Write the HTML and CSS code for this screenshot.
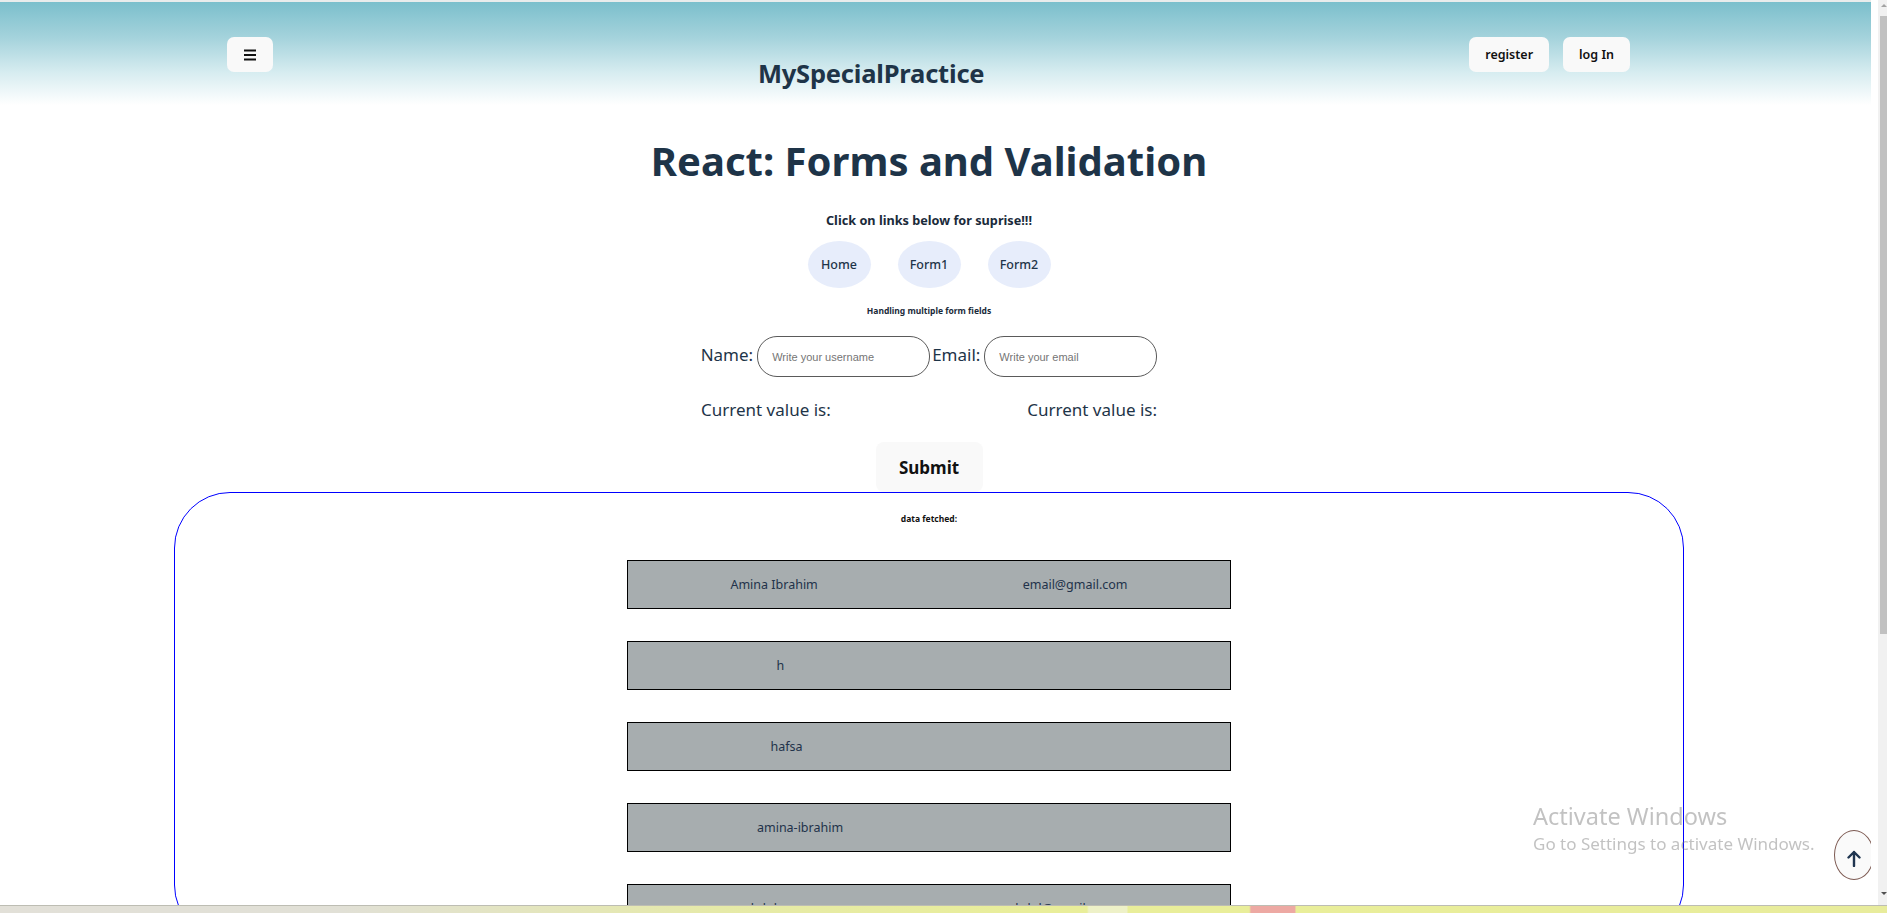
FILE: index.html
```html
<!DOCTYPE html>
<html lang="en">
<head>
<meta charset="utf-8">
<title>MySpecialPractice</title>
<link rel="stylesheet" href="styles.css">
</head>
<body>
<div class="topline"></div>
<header class="header">
  <button class="menu-btn" aria-label="menu">
    <svg width="12" height="12" viewBox="0 0 12 12"><rect x="0" y="0.5" width="12" height="2" fill="#111"/><rect x="0" y="5" width="12" height="2" fill="#111"/><rect x="0" y="9.5" width="12" height="2" fill="#111"/></svg>
  </button>
  <div class="brand">MySpecialPractice</div>
  <div class="auth">
    <button class="hbtn">register</button>
    <button class="hbtn">log In</button>
  </div>
</header>
<main class="main">
  <h1 class="title">React: Forms and Validation</h1>
  <p class="hint">Click on links below for suprise!!!</p>
  <nav class="pills">
    <a class="pill">Home</a>
    <a class="pill">Form1</a>
    <a class="pill">Form2</a>
  </nav>
  <p class="sub">Handling multiple form fields</p>
  <form class="form">
    <div class="fields">
      <label class="lbl">Name:</label>
      <input class="inp inp-name" type="text" placeholder="Write your username">
      <label class="lbl">Email:</label>
      <input class="inp" type="text" placeholder="Write your email">
    </div>
    <div class="values">
      <span>Current value is:</span>
      <span>Current value is:</span>
    </div>
    <button class="submit" type="button">Submit</button>
  </form>
  <section class="data">
    <p class="fetched">data fetched:</p>
    <div class="rows">
      <div class="row"><span>Amina Ibrahim</span><span>email@gmail.com</span></div>
      <div class="row"><span>h</span><span></span></div>
      <div class="row"><span>hafsa</span><span></span></div>
      <div class="row"><span>amina-ibrahim</span><span></span></div>
      <div class="row"><span>abdul</span><span>abdul@gmail.com</span></div>
    </div>
  </section>
</main>

<div class="watermark">
  <div class="wm-big">Activate Windows</div>
  <div class="wm-small">Go to Settings to activate Windows.</div>
</div>
<button class="to-top" aria-label="back to top">
  <svg width="14" height="17" viewBox="0 0 14 17"><path d="M7 16V2M1.5 7.5L7 2l5.5 5.5" fill="none" stroke="#1f3550" stroke-width="2.4" stroke-linecap="round" stroke-linejoin="round"/></svg>
</button>
<div class="scrollbar"><div class="sb-up"></div><div class="sb-thumb"></div><div class="sb-down"></div></div>
<div class="taskbar"></div>
</body>
</html>
```
FILE: styles.css
```css
html, body {
  margin: 0;
  padding: 0;
  overflow: hidden;
  height: 913px;
}
body {
  font-family: "Noto Sans", "Open Sans", sans-serif;
  color: #1f3446;
  background: #fff;
}
.topline {
  height: 2px;
  background: #e9ecec;
}
.header {
  height: 103px;
  box-sizing: border-box;
  padding: 35px 257px 0 227px;
  display: flex;
  justify-content: space-between;
  align-items: flex-start;
  background: linear-gradient(to bottom, #7bbfcc 0%, #a5d3dc 35%, #d6ecf0 68%, #ffffff 100%);
}
.menu-btn {
  width: 46px;
  height: 35px;
  border: none;
  border-radius: 7px;
  background: #f9f9f9;
  display: flex;
  align-items: center;
  justify-content: center;
  padding: 0;
}
.brand {
  margin-top: 21px;
  font-size: 25.5px;
  line-height: 30px;
  font-weight: 700;
  color: #1e3448;
  letter-spacing: -0.2px;
}
.auth {
  display: flex;
  gap: 14px;
}
.hbtn {
  height: 35px;
  border: none;
  border-radius: 7px;
  background: #f9f9f9;
  padding: 0 16px;
  font-family: "Noto Sans", sans-serif;
  font-size: 12.5px;
  font-weight: 600;
  color: #111;
}
.main {
  width: 1858px;
  text-align: center;
}
.title {
  margin: 31px 0 0;
  font-size: 40px;
  line-height: 50px;
  font-weight: 700;
  color: #1e3448;
}
.hint {
  margin: 26px 0 0;
  font-size: 12.7px;
  line-height: 16px;
  font-weight: 700;
  color: #1a2a3a;
}
.pills {
  margin-top: 13px;
  display: flex;
  justify-content: center;
  gap: 27px;
}
.pill {
  width: 63px;
  height: 47px;
  border-radius: 50%;
  background: #e7edfb;
  display: flex;
  align-items: center;
  justify-content: center;
  font-size: 12.5px;
  font-weight: 500;
  color: #1e3448;
}
.sub {
  margin: 17px 0 0;
  font-size: 8.5px;
  line-height: 12px;
  font-weight: 700;
  color: #1a2a3a;
}
.form {
  display: flex;
  flex-direction: column;
  align-items: center;
}
.fields {
  margin-top: 19px;
  display: flex;
  align-items: flex-start;
}
.lbl {
  margin-top: 7px;
  font-size: 17px;
  line-height: 24px;
  color: #1e3448;
  margin-right: 4px;
}
.inp {
  width: 173px;
  height: 41px;
  box-sizing: border-box;
  border: 1px solid #5a5a5a;
  border-radius: 20px;
  padding: 0 0 0 14px;
  font-family: "Liberation Sans", Arial, sans-serif;
  font-size: 11px;
  background: #fff;
}
.inp::placeholder {
  color: #757575;
}
.inp-name {
  margin-right: 2px;
}
.values {
  margin-top: 22px;
  width: 456px;
  display: flex;
  justify-content: space-between;
  font-size: 17px;
  line-height: 22px;
  color: #1e3448;
}
.submit {
  margin-top: 21px;
  width: 107px;
  height: 50px;
  border: none;
  border-radius: 8px;
  background: #f9f9f9;
  font-family: "Noto Sans", sans-serif;
  font-size: 17px;
  font-weight: 700;
  color: #111;
}
.data {
  margin: 0 174px;
  border: 1px solid #0000ff;
  border-radius: 56px;
  padding: 20px 0 7px;
}
.fetched {
  margin: 0;
  font-size: 8.5px;
  line-height: 12px;
  font-weight: 700;
  color: #111;
}
.rows {
  margin-top: 35px;
  display: flex;
  flex-direction: column;
  align-items: center;
  gap: 32px;
}
.row {
  width: 604px;
  height: 49px;
  box-sizing: border-box;
  border: 1px solid #000;
  background: #a7adaf;
  display: flex;
  justify-content: space-around;
  align-items: center;
  font-size: 12.5px;
  color: #22324a;
}
.watermark {
  position: fixed;
  left: 1533px;
  top: 800px;
  color: rgba(110, 110, 110, 0.42);
  text-align: left;
  pointer-events: none;
}
.wm-big {
  font-size: 23.5px;
  line-height: 32px;
}
.wm-small {
  font-size: 17px;
  line-height: 24px;
}
.to-top {
  position: fixed;
  left: 1834px;
  top: 830px;
  width: 40px;
  height: 50px;
  box-sizing: border-box;
  border: 1px solid #7d5a52;
  border-radius: 50%;
  background: #fafafa;
  padding: 0;
  display: flex;
  align-items: center;
  justify-content: center;
}
.to-top svg {
  margin-top: 6px;
}
.scrollbar {
  position: fixed;
  left: 1871px;
  top: 0;
  width: 16px;
  height: 913px;
  background: linear-gradient(to right, #ffffff 7px, #f1f1f1 7px);
}
.sb-thumb {
  position: absolute;
  left: 9px;
  right: 0;
  top: 16px;
  height: 618px;
  background: #c1c1c1;
}
.sb-up {
  position: absolute;
  left: 10px;
  top: 4px;
  width: 0;
  height: 0;
  border-left: 3px solid transparent;
  border-right: 3px solid transparent;
  border-bottom: 3px solid #a3a3a3;
}
.sb-down {
  position: absolute;
  left: 10px;
  top: 892px;
  width: 0;
  height: 0;
  border-left: 3px solid transparent;
  border-right: 3px solid transparent;
  border-top: 3px solid #505050;
}
.taskbar {
  position: fixed;
  left: 0;
  top: 905px;
  width: 1887px;
  height: 8px;
  border-top: 1px solid #bdbdb3;
  box-sizing: border-box;
  background: linear-gradient(to right, #e2e0d8 0%, #e1e0d6 18%, #e6eaa8 38%, #e9ee9a 55%, #e9ee9a 57.6%, #eef1c8 57.7%, #eef1c8 59.7%, #e9ee9a 59.8%, #e9ee9a 66.2%, #eda9a3 66.3%, #eda9a3 68.6%, #e9ee9a 68.7%, #e8ec9c 100%);
}
```
